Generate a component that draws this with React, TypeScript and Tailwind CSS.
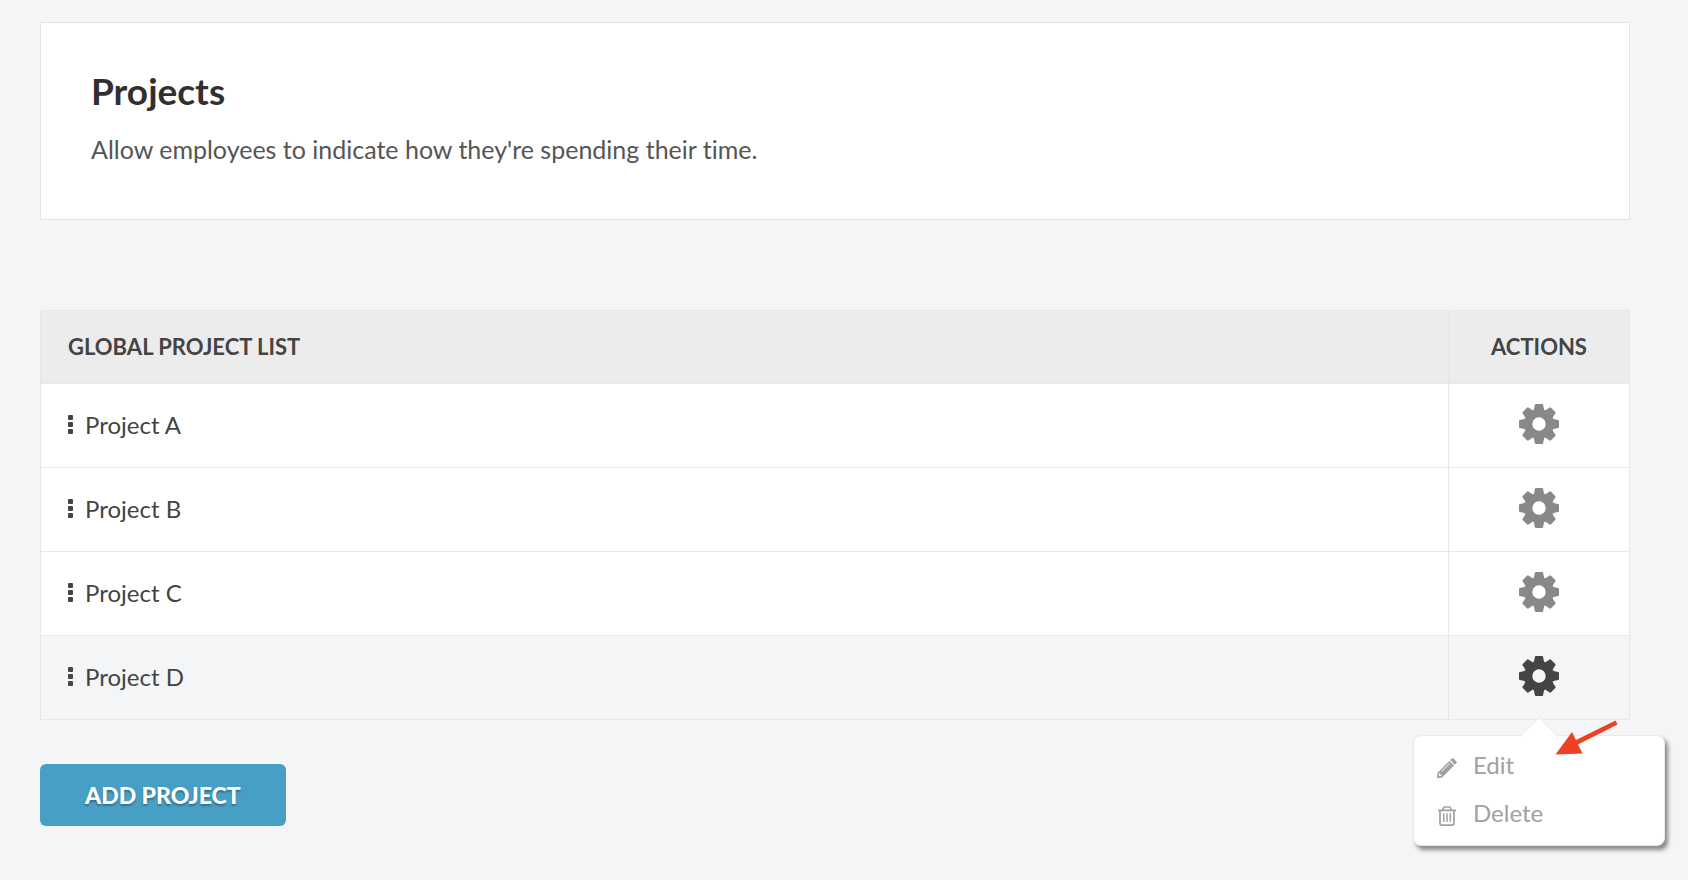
const projects = ["Project A", "Project B", "Project C", "Project D"];
const activeProject = "Project D";

const toothAngles = [0, 45, 90, 135, 180, 225, 270, 315];

function GearIcon() {
  return (
    <svg viewBox="-20 -20 40 40" className="size-10" fill="currentColor" aria-hidden="true">
      <circle r="10.6" fill="none" stroke="currentColor" strokeWidth="7.8" />
      {toothAngles.map((angle) => (
        <path
          key={angle}
          transform={`rotate(${angle})`}
          d="M-6.4 -12.5 Q-5 -14 -4.8 -15.6 L-4.1 -19.2 Q-3.9 -20 -3 -20 H3 Q3.9 -20 4.1 -19.2 L4.8 -15.6 Q5 -14 6.4 -12.5 Z"
        />
      ))}
    </svg>
  );
}

function DragHandle() {
  return (
    <svg viewBox="0 0 5 19" className="h-[19px] w-[5px] shrink-0" fill="currentColor" aria-hidden="true">
      <rect y="0" width="5" height="5" rx="1" />
      <rect y="7" width="5" height="5" rx="1" />
      <rect y="14" width="5" height="5" rx="1" />
    </svg>
  );
}

function PencilIcon() {
  return (
    <svg viewBox="0 0 20 20" className="size-5" fill="currentColor" aria-hidden="true">
      <path d="M13.2 2.1 L14.7 0.6 Q15.6 -0.2 16.5 0.6 L19.4 3.5 Q20.2 4.4 19.4 5.3 L17.9 6.8 Z" />
      <path
        fillRule="evenodd"
        d="M12.4 2.9 L17.1 7.6 L5.6 19.1 L4.6 19.7 L0 20 L0.3 15.4 L0.9 14.4 Z M2.1 15.6 L1.7 17.2 L2.8 18.3 L4.4 17.9 L4.4 16.8 L3.2 16.7 L3.2 15.6 Z M12.2 5.2 L4.5 12.9 L5 13.4 L12.7 5.7 Z"
      />
    </svg>
  );
}

function TrashIcon() {
  return (
    <svg viewBox="0 0 20 20" className="size-5" fill="none" stroke="currentColor" aria-hidden="true">
      <path strokeWidth="1.7" d="M1 4.4 H19 M5.8 4.2 L6.6 1.8 Q6.9 1 7.8 1 H12.2 Q13.1 1 13.4 1.8 L14.2 4.2" />
      <path strokeWidth="1.7" d="M3 4.4 V17.2 Q3 19.1 5 19.1 H15 Q17 19.1 17 17.2 V4.4" />
      <path strokeWidth="1.5" d="M6.7 7.2 V16 M10 7.2 V16 M13.3 7.2 V16" />
    </svg>
  );
}

function ActionsMenu() {
  return (
    <div className="absolute top-full -right-9 mt-4 w-[252px] rounded-lg border border-[#e9eaeb] bg-white pt-[5px] pb-2 text-left text-[#a1a1a1] shadow-[3px_4px_4px_#888888]">
      <svg viewBox="0 0 38 20" className="absolute -top-[19px] left-[106px] h-5 w-[38px]" aria-hidden="true">
        <path d="M0 20 L19 1 L38 20 Z" fill="#fff" />
        <path d="M0 19.5 L19 0.5 L38 19.5" fill="none" stroke="#e9eaeb" />
      </svg>
      <ul>
        <li>
          <button type="button" className="flex h-12 w-full items-center gap-4 pl-[23px]">
            <span className="pt-[5px]">
              <PencilIcon />
            </span>
            Edit
          </button>
        </li>
        <li>
          <button type="button" className="flex h-12 w-full items-center gap-4 pl-[23px]">
            <span className="pt-[5px]">
              <TrashIcon />
            </span>
            Delete
          </button>
        </li>
      </ul>
      <svg viewBox="0 0 64 36" className="absolute -top-4 left-[141px] h-9 w-16" fill="#ee4023" aria-hidden="true">
        <path d="M0.5 34.5 L17 12 L21 20 L60.5 0.5 L62.5 4.5 L23 24.5 L27.5 33.5 Z" />
      </svg>
    </div>
  );
}

export default function App() {
  return (
    <main className="min-h-screen bg-[#f4f5f7] pt-[22px] pr-[58px] pb-12 pl-10 font-['Lato','Liberation_Sans',sans-serif] text-2xl text-[#444444] [font-variant-ligatures:no-common-ligatures]">
      <header className="border border-[#e3e4e6] bg-white px-[50px] pt-[43px] pb-[50px]">
        <h1 className="text-[37px] leading-[50px] font-bold text-[#303030]">Projects</h1>
        <p className="mt-[13px] text-[25px] leading-10 text-[#555555]">
          Allow employees to indicate how they're spending their time.
        </p>
      </header>

      <table className="mt-[90px] w-full border-collapse bg-white">
        <thead>
          <tr className="h-[73px] bg-[#ececec] text-[22px]">
            <th className="border border-[#e6e7e8] pl-[27px] text-left font-bold">GLOBAL PROJECT LIST</th>
            <th className="w-[181px] border border-[#e6e7e8] font-bold">ACTIONS</th>
          </tr>
        </thead>
        <tbody>
          {projects.map((name) => {
            const active = name === activeProject;
            return (
              <tr key={name} className={active ? "h-[84px] bg-[#f4f5f7]" : "h-[84px]"}>
                <td className="border border-[#e6e7e8] pb-0.5 pl-[27px]">
                  <div className="flex items-center gap-3">
                    <DragHandle />
                    {name}
                  </div>
                </td>
                <td className="relative border border-[#e6e7e8] pb-1 text-center">
                  <button
                    type="button"
                    aria-label={`Actions for ${name}`}
                    aria-expanded={active}
                    className={active ? "mx-auto block text-[#444444]" : "mx-auto block text-[#888888]"}
                  >
                    <GearIcon />
                  </button>
                  {active && <ActionsMenu />}
                </td>
              </tr>
            );
          })}
        </tbody>
      </table>

      <button
        type="button"
        className="mt-11 h-[62px] rounded-md bg-[#489fc5] px-[45px] text-[23px] font-black text-white text-shadow-[0_2px_2px_rgb(0_0_0/0.3)]"
      >
        ADD PROJECT
      </button>
    </main>
  );
}
